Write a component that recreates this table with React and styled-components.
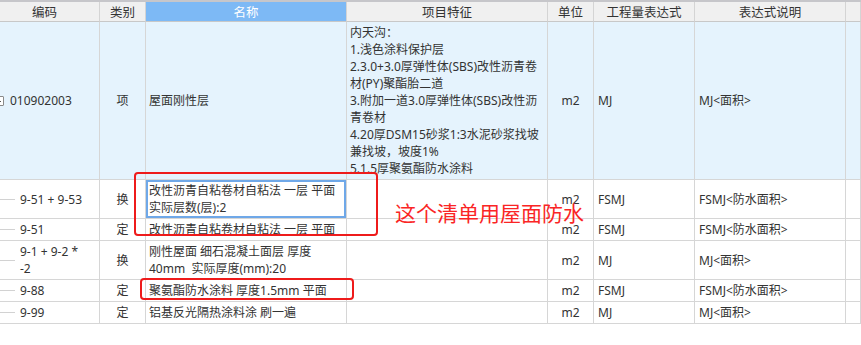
import React from 'react';
import styled, { createGlobalStyle } from 'styled-components';

const GlobalStyle = createGlobalStyle`
  body {
    margin: 0;
    background: #fff;
    font-family: "Noto Sans", "Noto Sans CJK SC", sans-serif;
    overflow: hidden;
  }
`;

const columns = [
  { key: 'code', title: '编码', width: 110 },
  { key: 'type', title: '类别', width: 46, center: true },
  { key: 'name', title: '名称', width: 201, active: true },
  { key: 'feature', title: '项目特征', width: 201 },
  { key: 'unit', title: '单位', width: 46, center: true },
  { key: 'expr', title: '工程量表达式', width: 101 },
  { key: 'desc', title: '表达式说明', width: 151 },
  { key: 'extra', title: '', width: 40 },
];

const rows = [
  {
    parent: true,
    height: 158,
    code: ['010902003'],
    type: '项',
    name: ['屋面刚性层'],
    feature: [
      '内天沟：',
      '1.浅色涂料保护层',
      '2.3.0+3.0厚弹性体(SBS)改性沥青卷',
      '材(PY)聚酯胎二道',
      '3.附加一道3.0厚弹性体(SBS)改性沥',
      '青卷材',
      '4.20厚DSM15砂浆1:3水泥砂浆找坡',
      '兼找坡，坡度1%',
      '5.1.5厚聚氨酯防水涂料',
    ],
    unit: 'm2',
    expr: 'MJ',
    desc: 'MJ<面积>',
  },
  {
    height: 39,
    code: ['9-51 + 9-53'],
    type: '换',
    name: ['改性沥青自粘卷材自粘法 一层 平面', '实际层数(层):2'],
    selected: true,
    unit: 'm2',
    expr: 'FSMJ',
    desc: 'FSMJ<防水面积>',
  },
  {
    height: 22,
    code: ['9-51'],
    type: '定',
    name: ['改性沥青自粘卷材自粘法 一层 平面'],
    unit: 'm2',
    expr: 'FSMJ',
    desc: 'FSMJ<防水面积>',
  },
  {
    height: 39,
    code: ['9-1 + 9-2 *', '-2'],
    type: '换',
    name: ['刚性屋面 细石混凝土面层 厚度', '40mm  实际厚度(mm):20'],
    unit: 'm2',
    expr: 'MJ',
    desc: 'MJ<面积>',
  },
  {
    height: 22,
    code: ['9-88'],
    type: '定',
    name: ['聚氨酯防水涂料 厚度1.5mm 平面'],
    unit: 'm2',
    expr: 'FSMJ',
    desc: 'FSMJ<防水面积>',
  },
  {
    height: 22,
    code: ['9-99'],
    type: '定',
    name: ['铝基反光隔热涂料涂 刷一遍'],
    unit: 'm2',
    expr: 'MJ',
    desc: 'MJ<面积>',
  },
];

const Lines = ({ lines }) => (
  <span>
    {lines.map((l, i) => (
      <React.Fragment key={i}>
        {i > 0 && <br />}
        {l}
      </React.Fragment>
    ))}
  </span>
);

const App = () => {
  const template = columns.map((c, i) => (i === columns.length - 1 ? '1fr' : `${c.width}px`)).join(' ');

  return (
    <Page>
      <GlobalStyle />
      <Grid $template={template}>
        {columns.map((c) => (
          <HeadCell key={c.key} $active={c.active}>{c.title}</HeadCell>
        ))}
        {rows.map((r, ri) => (
          <React.Fragment key={ri}>
            <Cell $h={r.height} $bg={r.parent}>
              <CodeWrap $parent={r.parent}>
                {r.parent ? <Toggle /> : <TreeLine />}
                <Lines lines={r.code} />
              </CodeWrap>
            </Cell>
            <Cell $h={r.height} $bg={r.parent} $center>{r.type}</Cell>
            <Cell $h={r.height} $bg={r.parent} $selected={r.selected}>
              <Lines lines={r.name} />
            </Cell>
            <Cell $h={r.height} $bg={r.parent}>
              {r.feature && <Lines lines={r.feature} />}
            </Cell>
            <Cell $h={r.height} $bg={r.parent} $center>{r.unit}</Cell>
            <Cell $h={r.height} $bg={r.parent} $pad={4}>{r.expr}</Cell>
            <Cell $h={r.height} $bg={r.parent} $pad={4}>{r.desc}</Cell>
            <Cell $h={r.height} $bg={r.parent} />
          </React.Fragment>
        ))}
      </Grid>

      <RedBox $x={134} $y={172} $w={244} $h={64} />
      <RedBox $x={140} $y={278} $w={214} $h={22} />
      <Note>这个清单用屋面防水</Note>
    </Page>
  );
};

const Page = styled.div`
  position: relative;
  width: 861px;
  height: 345px;
  overflow: hidden;
  background: #fff;
`;

const Grid = styled.div`
  display: grid;
  grid-template-columns: ${(p) => p.$template};
  margin-left: -10px;
  width: 871px;
  border-top: 2px solid #c6c6ca;
  font-size: 12px;
  color: #333;
`;

const HeadCell = styled.div`
  height: 19px;
  display: flex;
  align-items: center;
  justify-content: center;
  background: ${(p) => (p.$active ? '#7db9f5' : '#f0f0f0')};
  color: ${(p) => (p.$active ? '#fff' : '#333')};
  border-right: 1px solid #d4d4d4;
  border-bottom: 1px solid #c8c8c8;
  font-size: 12.5px;
`;

const Cell = styled.div`
  box-sizing: border-box;
  height: ${(p) => p.$h}px;
  display: flex;
  align-items: center;
  justify-content: ${(p) => (p.$center ? 'center' : 'flex-start')};
  padding-left: ${(p) => (p.$center ? 0 : p.$pad || 3)}px;
  background: ${(p) => (p.$bg ? '#e5f3fd' : '#fff')};
  border-right: 1px solid #d6d6d6;
  border-bottom: 1px solid #d6d6d6;
  line-height: 17px;
  white-space: pre;
  overflow: hidden;
  box-shadow: ${(p) => (p.$selected ? 'inset 0 0 0 2px #6fa8e8' : 'none')};
`;

const CodeWrap = styled.div`
  display: flex;
  align-items: center;
  gap: ${(p) => (p.$parent ? 6 : 5)}px;
  margin-left: ${(p) => (p.$parent ? 1 : 7)}px;
`;

const Toggle = styled.span`
  width: 8px;
  height: 8px;
  border: 1px solid #8a8a8a;
  border-radius: 1px;
  position: relative;
  background: #fff;
  &::after {
    content: '';
    position: absolute;
    left: 2px;
    right: 2px;
    top: 4px;
    height: 1px;
    background: #555;
  }
`;

const TreeLine = styled.span`
  width: 15px;
  height: 1px;
  background: #d2d2d2;
`;

const RedBox = styled.div`
  position: absolute;
  left: ${(p) => p.$x}px;
  top: ${(p) => p.$y}px;
  width: ${(p) => p.$w}px;
  height: ${(p) => p.$h}px;
  border: 2.5px solid #ee1b1b;
  border-radius: 4px;
  box-sizing: border-box;
  pointer-events: none;
`;

const Note = styled.div`
  position: absolute;
  left: 395px;
  top: 199px;
  font-family: "Noto Sans CJK SC", sans-serif;
  font-size: 21px;
  line-height: 26px;
  color: #fa2525;
  white-space: nowrap;
`;

export default App;
